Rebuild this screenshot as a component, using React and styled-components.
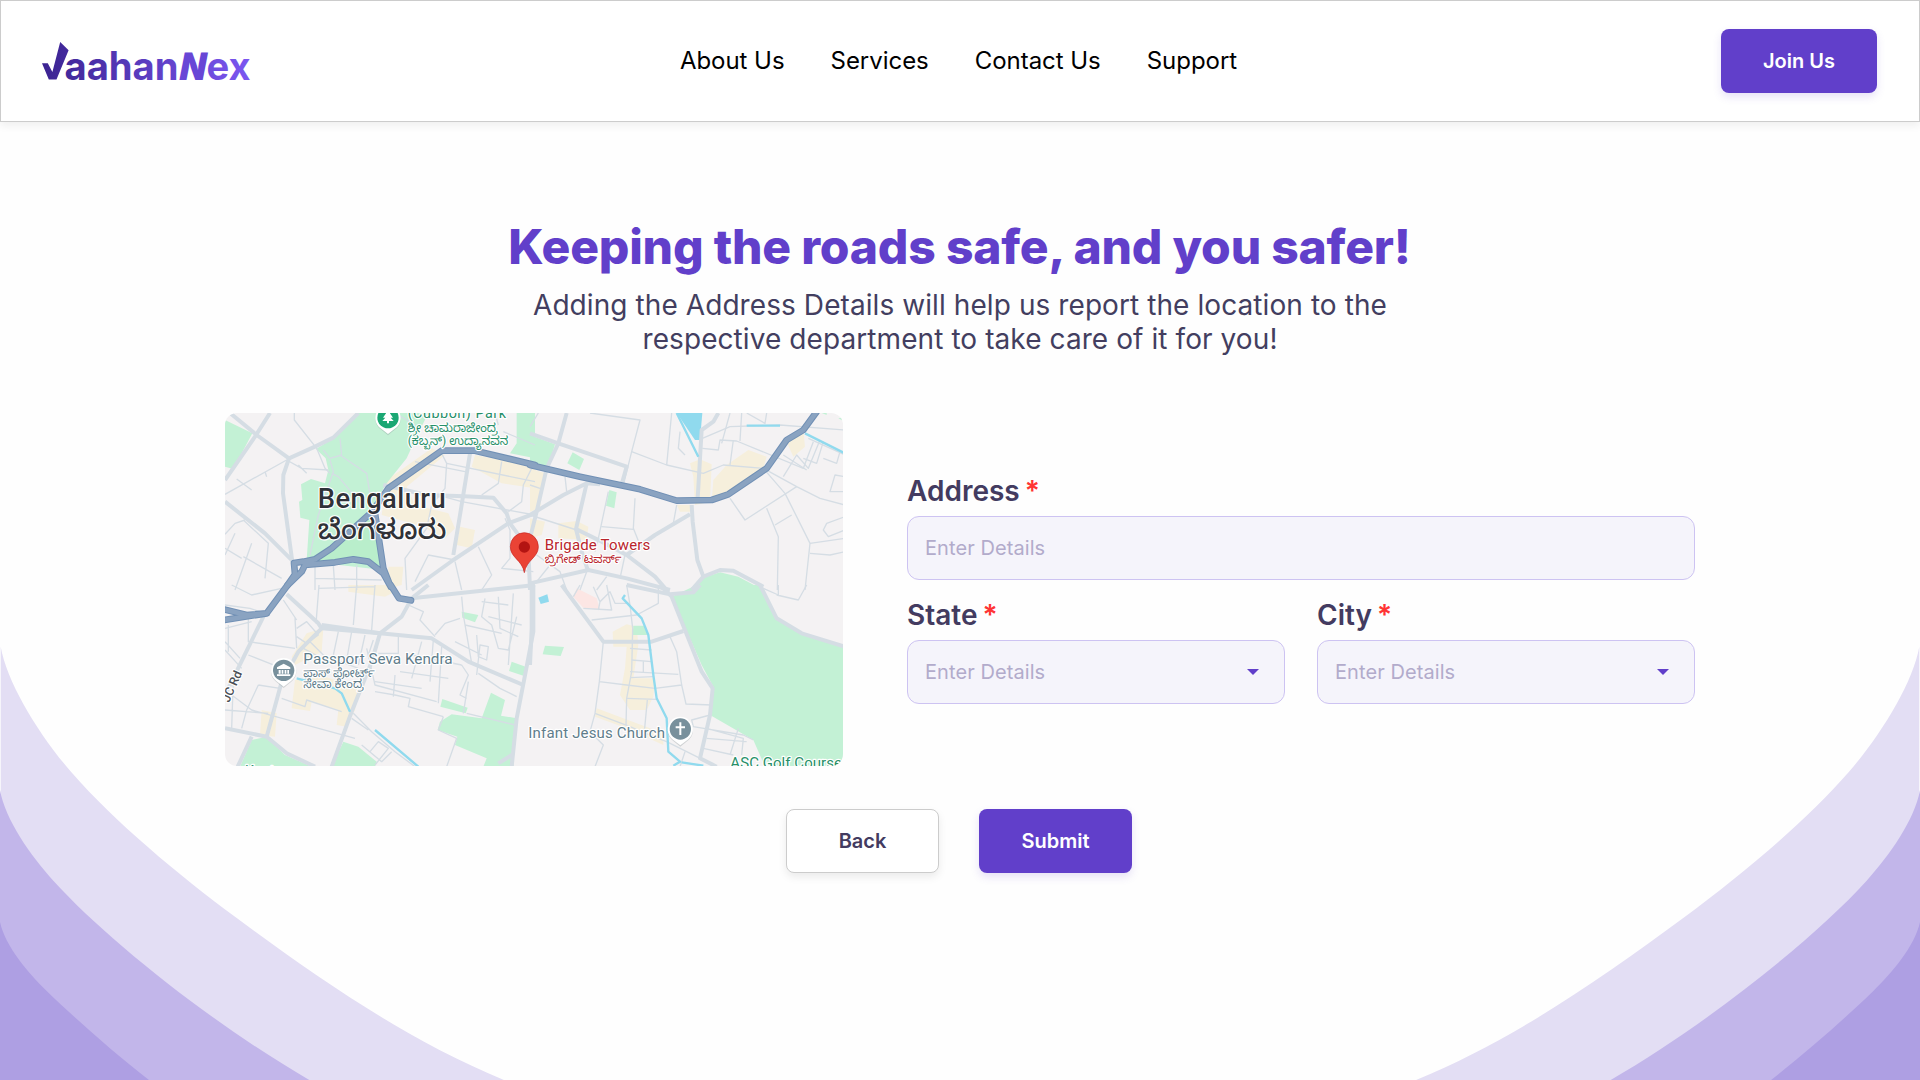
import React from "react";
import styled, { createGlobalStyle } from "styled-components";

const GlobalStyle = createGlobalStyle`
  *, *::before, *::after { box-sizing: border-box; }
  body { margin: 0; background: #fff; font-family: Inter, "Liberation Sans", sans-serif; }
  button, input { font-family: inherit; }
`;

const Page = styled.div`
  position: relative;
  height: 1080px;
  overflow: hidden;
  background: #fefefe;
`;

const Wave = styled.svg`
  position: absolute;
  bottom: 0;
  left: ${(p) => (p.$flip ? "auto" : 0)};
  right: ${(p) => (p.$flip ? 0 : "auto")};
  transform: ${(p) => (p.$flip ? "scaleX(-1)" : "none")};
  width: 504px;
  height: 437px;
`;

const Header = styled.header`
  position: relative;
  display: grid;
  grid-template-columns: 1fr auto 1fr;
  align-items: center;
  height: 122px;
  padding: 0 42px 0 41px;
  background: #fff;
  border: 1px solid #ccc;
  box-shadow: 0 4px 8px rgba(0, 0, 0, 0.06);
`;

const Logo = styled.svg`
  width: 210px;
  height: 44px;
  overflow: visible;
  font-family: Inter, sans-serif;
  font-weight: 700;
`;

const Nav = styled.nav`
  display: flex;
  gap: 46px;
  margin-right: 2px;
  font-size: 24px;
  line-height: 30px;
  letter-spacing: -0.04px;
`;

const NavLink = styled.a`
  color: #000;
  text-decoration: none;
`;

const Button = styled.button`
  width: ${(p) => p.$width || 153}px;
  height: 64px;
  padding: 0;
  border-radius: 8px;
  border: ${(p) => (p.$outline ? "1px solid #ccc" : "none")};
  background: ${(p) => (p.$outline ? "#fff" : "#613fca")};
  color: ${(p) => (p.$outline ? "#433b60" : "#fff")};
  font-size: 20px;
  font-weight: 600;
  justify-self: end;
  box-shadow: 0 4px 8px ${(p) => (p.$outline ? "rgba(0,0,0,0.08)" : "rgba(97,63,202,0.15)")};
`;

const Main = styled.main`
  position: relative;
  display: flex;
  flex-direction: column;
  align-items: center;
  padding-top: 96px;
`;

const Title = styled.h1`
  margin: 0 1px 0 0;
  color: #613fca;
  font-size: 48px;
  font-weight: 800;
  line-height: 58px;
  letter-spacing: -0.2px;
`;

const Subtitle = styled.p`
  width: 900px;
  margin: 12px 0 57px;
  color: #433e60;
  font-size: 28px;
  line-height: 34px;
  letter-spacing: 0.08px;
  text-align: center;
`;

const Content = styled.section`
  display: flex;
  align-items: center;
  gap: 64px;
  width: 1470px;
`;

const MapFrame = styled.div`
  flex: none;
  width: 618px;
  height: 353px;
  border-radius: 12px;
  overflow: hidden;
`;

const MapSvg = styled.svg`
  display: block;
  width: 100%;
  height: 100%;
  font-family: Roboto, "Noto Sans", "Noto Sans Kannada", sans-serif;
`;

const Form = styled.form`
  flex: 1;
  display: grid;
  grid-template-columns: 1fr 1fr;
  gap: 18px 32px;
  margin-bottom: 2px;
`;

const Field = styled.div`
  display: flex;
  flex-direction: column;
  gap: 8px;
  grid-column: ${(p) => (p.$wide ? "1 / -1" : "auto")};
`;

const Label = styled.label`
  display: flex;
  gap: 5px;
  color: #433b60;
  font-size: 28px;
  font-weight: 600;
  line-height: 34px;
`;

const Required = styled.span`
  color: #ff3434;
`;

const Control = styled.div`
  display: flex;
  align-items: center;
  justify-content: space-between;
  height: 64px;
  padding: 0 25px 0 17px;
  border: 1px solid #cdc3f2;
  border-radius: 12px;
  background: #f5f4fb;
  color: #b2abcb;
  font-size: 20px;
  letter-spacing: 0.08px;
`;

const Caret = styled.svg`
  width: 12px;
  height: 6px;
  fill: #613fca;
`;

const Actions = styled.div`
  display: flex;
  gap: 40px;
  margin-top: 43px;
  margin-right: 2px;
`;

function Waves({ flip }) {
  return (
    <Wave $flip={flip} viewBox="0 129 1411.2 1311" preserveAspectRatio="none" aria-hidden="true">
      <path fill="#e3def4" d="M2 140C20 250 110 405 200 517C320 665 500 825 660 952C900 1142 1140 1320 1411 1440H2Z" />
      <path fill="#c2b6ea" d="M0 570C15 660 85 765 150 843C300 1020 600 1275 866 1440H0Z" />
      <path fill="#ae9fe3" d="M0 966C15 1040 80 1120 130 1172C210 1255 310 1350 417 1440H0Z" />
    </Wave>
  );
}

function BrandLogo() {
  return (
    <Logo viewBox="0 0 210 44" role="img" aria-label="VaahanNex">
      <defs>
        <linearGradient id="brand" gradientUnits="userSpaceOnUse" x1="0" y1="0" x2="210" y2="0">
          <stop offset="0" stopColor="#3b2391" />
          <stop offset="1" stopColor="#7c57f2" />
        </linearGradient>
      </defs>
      <g fill="url(#brand)">
        <path d="M0 24.3H5.8L10.4 33L18.2 3L26.6 11.2L14.5 40.6H6.8Z" />
        <text x="22.5" y="40.6" fontSize="39" textLength="114" lengthAdjust="spacingAndGlyphs">aahan</text>
        <text transform="translate(135.8 40.6) skewX(-11)" fill="#6846d6" fontSize="38" fontWeight="900" textLength="26.5" lengthAdjust="spacingAndGlyphs">N</text>
        <text x="164.5" y="40.6" fontSize="39" textLength="44" lengthAdjust="spacingAndGlyphs">ex</text>
      </g>
    </Logo>
  );
}

const ROAD = "#d5dde4";

/* The map is drawn on four tiles; each has parks, built-up areas, water and roads. */
const TILES = [
  {
    x: 0, y: 0,
    green: ["M430 24L355 100L303 132L332 160L340 195L330 235L288 222L258 238L262 285L252 290L256 338L283 345L275 465L300 472L505 495L485 335L465 320L515 235L575 160L600 105L640 24Z", "M30 45L112 85L55 192L30 185Z", "M905 24H960V160L885 145L905 115Z"],
    beige: ["M515 225L650 130L690 150L575 245L600 300L700 325L720 370L690 400L610 360L500 330Z", "M780 150L960 185V250L860 235L770 185Z", "M520 485L565 485L560 540L520 550Z", "M735 365L780 375L770 430L725 420Z"],
    minor: ["M238 24V45L305 130L330 190L345 205", "M30 268L215 165M65 222L110 255M150 200L155 215", "M215 165L260 190L340 195M250 180L275 205", "M375 100L380 150L345 160L325 135M375 150L455 205L470 300", "M345 165L355 200L310 330L285 450", "M350 205L370 215L450 310", "M30 388L60 355L90 345M60 385L30 450M110 415L60 555M85 345L160 415L150 520M85 455L200 520M30 430L80 460", "M540 24L600 60M600 170L750 200", "M680 145L695 175L690 250L650 300L635 370L570 460L575 555", "M695 175L960 230M650 265L740 290L960 330M860 170L850 235L800 270", "M960 170L925 240L920 290L880 320", "M870 340L885 375V460L860 490L955 500", "M720 470L740 555M790 425L830 510L800 555M600 530L640 450L720 465", "M300 480V555M355 482L360 555M425 480V555M300 520L500 525", "M865 80L960 120M850 60L840 24"],
    major: ["M45 24L125 90L222 160L300 125L355 98L430 24", "M165 24L120 95L30 225", "M222 160L205 210L204 265L232 470", "M30 290L150 385L235 470", "M765 145L735 330L715 450", "M505 240L635 270L748 274L835 278L875 325L885 355", "M960 325L880 355L715 465L590 555", "M885 355L940 430L945 555"],
    blue: "M218 540L240 508L237 474L265 470L300 463L350 430L470 322L520 250L680 137L780 137L960 180M218 540L260 500L270 480L360 472L415 463L460 470L505 505L527 545M480 325L505 490L527 545",
  },
  {
    x: 945, y: 0,
    green: ["M0 90L75 118L55 185L0 172Z", "M128 142L162 162L148 195L112 175Z", "M238 255L260 262L253 310L228 302Z", "M500 555L515 520L570 502L625 515L700 555Z", "M925 40L945 35V50Z", "M865 20H890V30Z"],
    beige: ["M480 175L510 163L545 178L540 290L495 300L490 215Z", "M550 225L590 180L655 135L710 155L700 190L610 260L545 290Z", "M770 110L820 75L825 125L790 155Z", "M0 190L45 205L30 310L0 320Z", "M85 355L140 348L175 365L170 405L85 400Z", "M0 340L45 350L35 390L0 400Z", "M440 300H490V320H450Z"],
    water: ["M440 24H517L510 105L495 105Z"],
    minor: ["M0 65L25 24M180 24L330 45L305 140L280 240", "M305 140L410 180L520 205L580 180L700 190", "M425 24L410 180M450 80L445 130L465 150", "M517 100L600 65L750 60L945 75M517 130L565 135L570 105L620 108L820 190L850 110", "M600 24L575 115M635 24L630 108M710 24L705 55L650 24M610 105L600 180", "M700 190L765 265L840 415L825 555", "M600 280L645 345L800 245M710 310L745 395L742 555M735 360L785 330", "M700 190L800 245L870 280L945 300M760 215L800 150L835 190L870 105M760 150L830 195M820 160L860 175L880 110M835 100L945 150M880 160L920 175L930 140M945 215L915 210L900 260L945 260", "M945 335L890 355L880 375L895 395L945 375M840 415L945 400M840 445L900 450L945 440", "M105 215L110 260M235 260L205 400L195 440M315 280L310 370L330 420M215 365L310 373M440 300L430 355", "M0 330L140 375M0 240L30 250M20 450L90 500L110 555M60 480L20 530M170 500L150 555M285 450L270 520M230 515L200 555"],
    major: ["M110 24L85 115L50 190L20 320L0 400", "M0 85L85 115L290 185L275 238", "M565 24L550 50L515 75L510 160L503 280", "M485 300L488 350L502 465L520 515L485 555", "M0 330L100 270L170 235L210 238M170 235L138 372L215 410L290 450L375 515L410 555", "M138 372L155 440L175 500M480 328L375 390L290 450", "M0 535L175 495L290 520L420 555", "M520 515L570 495L610 497L700 545"],
    blue: "M0 180L150 215L330 253L440 287L545 285L595 268L710 190L770 105L820 75L860 20",
    stream: "M440 24L505 155M650 62L750 62M825 85L945 145",
  },
  {
    x: 0, y: 540,
    green: ["M75 545L110 465L155 455L210 510L290 545Z", "M385 470L430 485L485 530L480 545H350Z", "M740 80L790 90L780 112L742 98Z", "M890 230L932 245L925 272L882 258Z", "M682 342L758 368L752 385L676 365Z", "M828 323L870 345L858 392L905 400L895 545H805L815 520L720 480L727 455L668 435L675 410L710 388L800 400Z"],
    beige: ["M400 0H545L540 20L510 35L400 20Z", "M275 145L325 130L320 200L240 240L230 215Z", "M240 285L330 275L435 310L420 375L395 425L365 420L370 375L290 350L285 378L230 370Z", "M140 375L185 385L180 455L135 450Z"],
    minor: ["M40 120V200M30 130L110 110M30 170L75 220M30 60L105 70L150 85M50 0L110 30L200 10M100 90V170L240 190M30 195L80 250M100 210L240 265", "M240 100L245 190M245 130L275 110L310 150L275 175L245 155M205 45L245 105", "M312 0L303 115M425 0L415 120M480 0L470 135M310 10L480 5", "M370 140L355 210M410 140L395 225M450 150L430 240M475 165L460 210M285 170L325 210L430 250M265 190L330 225M455 190L480 300L665 350M550 150V205H490", "M740 35L745 90L770 235M660 150L690 115L735 100M580 60L625 80L615 105L660 155M750 120L860 145M810 40L800 95L830 120L850 190L880 195L905 95M850 35L855 130L910 155M800 50L880 60M895 25L880 240M820 95L920 120M720 170L800 210M785 150L790 215L815 225L820 185L795 180L785 270M620 170L590 280M655 165L645 290M680 185L670 355M590 210L740 240M555 260L700 280M480 290L620 310M540 270L535 335M480 320L540 330L585 340L580 365L685 395M740 240L760 270L735 330L755 340M790 265L855 310L905 335M760 290L745 385M755 385L900 420", "M130 300L195 310M130 300L95 375L80 430M55 280L50 430M30 375L160 385M30 315L110 375L420 460M200 340L270 365L275 345L380 380M190 260L210 270M270 280L310 300", "M415 385L470 440L540 500L600 545M410 400L460 435M440 480L500 530L530 500M465 500L490 470L520 490L480 540M685 395L670 435L725 460L695 545"],
    major: ["M215 28L310 115L320 130L495 145L560 95L590 40L640 0", "M150 85L30 330", "M320 130L250 200L200 290L155 455", "M495 145L470 230L410 380L350 545", "M320 120L495 145L650 160L760 230L925 300", "M30 430L155 455L215 505L300 545M110 455L68 545", "M590 40L960 0", "M955 0V140L935 245L905 400L890 545M890 510L850 535"],
    blue: "M218 0L155 85L95 90L26 73M26 105L155 85M527 0L552 40L588 46",
    stream: "M245 280L360 310L380 325L405 380M480 435L610 545",
  },
  {
    x: 945, y: 540,
    green: ["M425 35L500 0L690 0L740 100L830 150L945 185V545H705L670 465L540 390L550 305L515 240Z", "M45 182L102 186L92 213L38 208Z", "M310 122H345L355 150H308Z"],
    beige: ["M248 140L290 118L320 125L325 180L310 280L375 280L370 335L350 375L300 375L270 330L285 250L290 185L250 185Z", "M200 370L400 445V480L290 430L195 395Z"],
    red: "M140 10L200 40L210 75L160 68L130 35Z",
    water: ["M25 38L52 28L57 50L32 57Z"],
    minor: ["M130 35L150 0M160 70L245 75L230 0M190 5L210 50L240 20L255 55L300 55M210 50L205 75M290 0L300 60L308 130L305 260L290 340L288 420M385 10V55L320 90L185 105", "M220 170L208 290L195 385M195 385L300 425L370 455L410 470M208 290L290 300L375 310L455 300M300 190L365 195M305 225L365 230M340 230V260M300 260L445 268M300 278L370 275M420 155L440 200L455 300L468 357L545 360M290 340L380 343M352 345L343 440", "M540 390L485 405L490 425L640 450L670 465M530 430L640 460L635 510M530 460L650 470M520 490L610 510M625 430L600 510M195 385L180 440L220 480L195 545M410 470L530 530M465 500L450 545M700 10L745 30V0M740 30L805 45L830 0"],
    major: ["M95 0L220 170L365 170L460 138", "M290 0L420 28L490 22L510 0M390 0L425 35L515 260L548 310L540 390L510 520L560 545", "M690 0L740 100L815 145L945 185", "M5 0V130L0 240"],
    stream: "M285 30L278 40L335 100L355 150L370 270L380 340L410 400L415 500L450 530L430 542M455 532L520 542",
  },
];

function Pin({ x, y, fill, children }) {
  return (
    <g transform={`translate(${x} ${y})`}>
      <path d="M0 50L-22 32A38 38 0 1 1 22 32Z" fill="#8d979c" opacity=".35" transform="translate(0 3)" />
      <path d="M0 49L-22 32A38 38 0 1 1 22 32Z" fill="#fff" />
      <circle r="32" fill={fill} />
      {children}
    </g>
  );
}

const Halo = styled.text`
  paint-order: stroke;
  stroke: #fff;
  stroke-width: 7px;
  stroke-linejoin: round;
  fill: ${(p) => p.$color};
  font-size: ${(p) => p.$size}px;
  font-weight: ${(p) => p.$weight || 400};
`;

function CityMap() {
  return (
    <MapSvg viewBox="30 24 1854 1059" preserveAspectRatio="none">
      <rect x="30" y="24" width="1854" height="1059" fill="#f4f2f3" />
      {TILES.map((t, i) => (
        <g key={i} transform={`translate(${t.x} ${t.y})`}>
          {t.beige.map((d) => <path key={d} d={d} fill="#f6efdc" />)}
          {t.green.map((d) => <path key={d} d={d} fill="#c3f1d5" />)}
          {t.red && <path d={t.red} fill="#fce6e4" />}
          {(t.water || []).map((d) => <path key={d} d={d} fill="#90daee" />)}
        </g>
      ))}
      <path d="M485 335L460 335L300 470L420 458L505 495Z" fill="#b9eecb" />
      {TILES.map((t, i) => (
        <g key={i} transform={`translate(${t.x} ${t.y})`} fill="none" stroke={ROAD} strokeLinejoin="round">
          {t.minor.map((d) => <path key={d} d={d} strokeWidth="4" />)}
          {t.major.map((d) => <path key={d} d={d} strokeWidth="12" />)}
          {t.stream && <path d={t.stream} stroke="#90daee" strokeWidth="7" />}
        </g>
      ))}
      <g fill="none" stroke="#7190b5" strokeWidth="20" strokeLinejoin="round" strokeLinecap="round">
        {TILES.map((t, i) => t.blue && <path key={i} d={t.blue} transform={`translate(${t.x} ${t.y})`} />)}
      </g>
      <g fill="none" stroke="#8aa3c1" strokeWidth="14" strokeLinejoin="round" strokeLinecap="round">
        {TILES.map((t, i) => t.blue && <path key={i} d={t.blue} transform={`translate(${t.x} ${t.y})`} />)}
      </g>

      <Pin x={519} y={38} fill="#1aa773">
        <path d="M0-22L-15 0H-8L-17 10H-3V17H3V10H17L8 0H15Z" fill="#fff" />
      </Pin>
      <Halo $color="#278f69" $size={43} x="578" y="40" textLength="295">(Cubbon) Park</Halo>
      <Halo $color="#278f69" $size={36} x="578" y="80" textLength="270" lengthAdjust="spacingAndGlyphs">ಶ್ರೀ ಚಾಮರಾಜೇಂದ್ರ</Halo>
      <Halo $color="#278f69" $size={36} x="578" y="119" textLength="302" lengthAdjust="spacingAndGlyphs">(ಕಬ್ಬನ್) ಉದ್ಯಾನವನ</Halo>

      <Halo $color="#303238" $size={82} $weight={500} x="308" y="309" textLength="384">Bengaluru</Halo>
      <Halo $color="#303238" $size={84} $weight={500} x="308" y="402" textLength="386" lengthAdjust="spacingAndGlyphs">ಬೆಂಗಳೂರು</Halo>

      <path d="M928 503C922 465 886 458 886 425A42 42 0 0 1 970 425C970 458 934 465 928 503Z" fill="#ea4335" stroke="#c5221f" strokeWidth="2" />
      <circle cx="928" cy="426" r="17" fill="#b31412" />
      <Halo $color="#b9252c" $size={45} x="989" y="435" textLength="317">Brigade Towers</Halo>
      <Halo $color="#b9252c" $size={34} x="989" y="474" textLength="230" lengthAdjust="spacingAndGlyphs">ಬ್ರಿಗೇಡ್ ಟವರ್ಸ್</Halo>

      <Pin x={206} y={796} fill="#78909c">
        <path d="M0-20L-20-9V-4H20V-9ZM-15-1H-9V10H-15ZM-6-1H-1V10H-6ZM3-1H8V10H3ZM11-1H16V10H11ZM-20 12H20V17H-20Z" fill="#fff" />
      </Pin>
      <Halo $color="#607d8b" $size={46} x="265" y="777" textLength="448">Passport Seva Kendra</Halo>
      <Halo $color="#607d8b" $size={36} x="265" y="817" textLength="214" lengthAdjust="spacingAndGlyphs">ಪಾಸ್ ಪೋರ್ಟ್</Halo>
      <Halo $color="#607d8b" $size={36} x="265" y="850" textLength="181" lengthAdjust="spacingAndGlyphs">ಸೇವಾ ಕೇಂದ್ರ</Halo>

      <Pin x={1396} y={972} fill="#78909c">
        <path d="M-3-20H3V-8H14V-2H3V18H-3V-2H-14V-8H-3Z" fill="#fff" />
      </Pin>
      <Halo $color="#607d8b" $size={45} x="940" y="998" textLength="410">Infant Jesus Church</Halo>
      <Halo $color="#278f69" $size={45} x="1546" y="1088" textLength="335">ASC Golf Course</Halo>
      <Halo $color="#4b4f55" $size={37} $weight={500} transform="translate(42 894) rotate(-66)">JC Rd</Halo>
      <Halo $color="#278f69" $size={43} x="90" y="1112">Kanteerava</Halo>
    </MapSvg>
  );
}

function FormField({ label, wide, select }) {
  return (
    <Field $wide={wide}>
      <Label>{label}<Required>*</Required></Label>
      <Control>
        <span>Enter Details</span>
        {select && <Caret viewBox="0 0 12 6"><path d="M0 0H12L6 6Z" /></Caret>}
      </Control>
    </Field>
  );
}

export default function App() {
  return (
    <Page>
      <GlobalStyle />
      <Waves />
      <Waves flip />
      <Header>
        <BrandLogo />
        <Nav>
          {["About Us", "Services", "Contact Us", "Support"].map((item) => (
            <NavLink key={item}>{item}</NavLink>
          ))}
        </Nav>
        <Button $width={156}>Join Us</Button>
      </Header>
      <Main>
        <Title>Keeping the roads safe, and you safer!</Title>
        <Subtitle>
          Adding the Address Details will help us report the location to the respective department to take care of it for you!
        </Subtitle>
        <Content>
          <MapFrame><CityMap /></MapFrame>
          <Form>
            <FormField label="Address" wide />
            <FormField label="State" select />
            <FormField label="City" select />
          </Form>
        </Content>
        <Actions>
          <Button type="button" $outline>Back</Button>
          <Button type="button">Submit</Button>
        </Actions>
      </Main>
    </Page>
  );
}
